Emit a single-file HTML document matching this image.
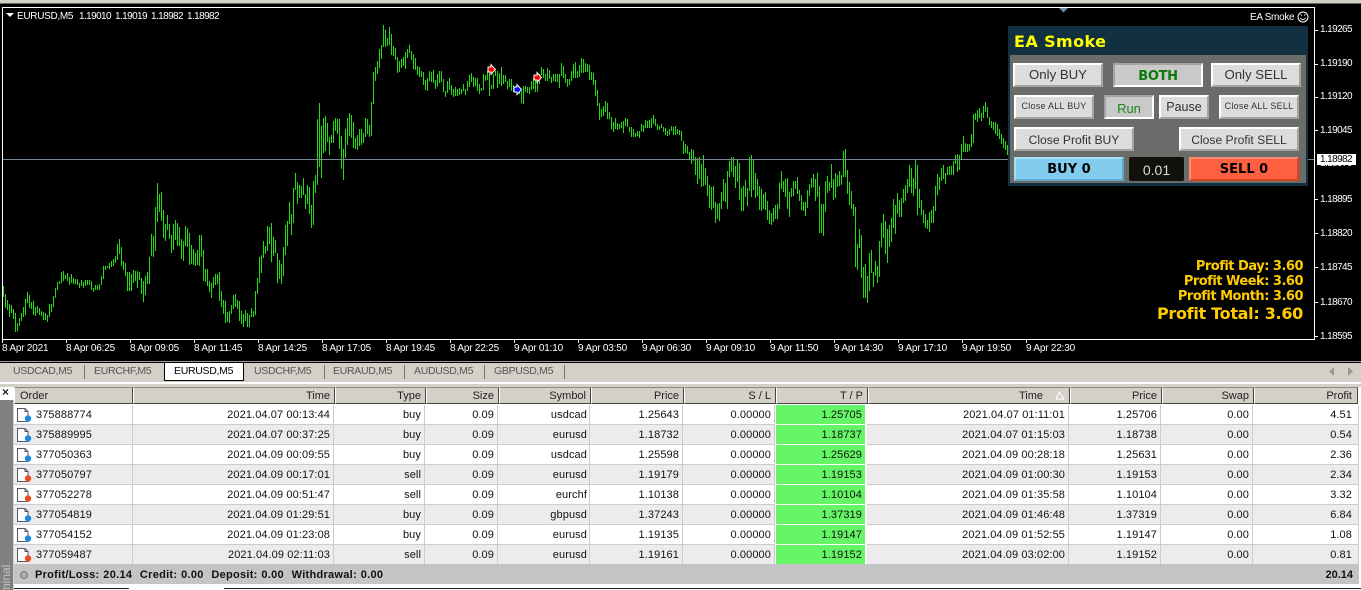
<!DOCTYPE html>
<html><head><meta charset="utf-8"><title>EURUSD,M5</title>
<style>
html,body{margin:0;padding:0;background:#fff;width:1361px;height:590px;overflow:hidden}
#root{width:1361px;height:590px;position:relative;overflow:hidden;font:11px/13px "Liberation Sans",sans-serif;color:#111}
.a{position:absolute;white-space:nowrap}
#chart{left:0;top:4px;width:1361px;height:357px;background:#000}
.w{color:#fff;font-size:10px;line-height:13px;letter-spacing:-.2px}
.n{color:#fff;font-size:10px;line-height:13px;letter-spacing:-.6px}
.btn{position:absolute;box-sizing:border-box;height:24px;background:#dcdcdc;border:2px solid;border-color:#fff #a3a3a3 #a3a3a3 #fff;text-align:center;line-height:20px;color:#333;font-size:13.2px;white-space:nowrap}
.dn{background:#c9c9c9;border-color:#a3a3a3 #fff #fff #a3a3a3}
.sm{font-size:9px;letter-spacing:.25px;line-height:18px}
.md{font-size:12.1px;line-height:22px}
.pf{right:58px;color:#ffcc00;font:bold 13px/15px "DejaVu Sans",sans-serif;letter-spacing:-.5px;text-align:right}
.tab{position:absolute;top:365px;color:#555;font-size:10.5px;letter-spacing:-.3px;line-height:13px;white-space:nowrap}
.sep{position:absolute;top:365px;height:14px;width:1px;background:#777}
.h{position:absolute;top:387px;height:17px;box-sizing:border-box;background:#d4d0c8;border:1px solid;border-color:#888 #444 #444 #fff;text-align:right;padding-right:4px;line-height:17px;font-size:11px;color:#222}
.r{position:absolute;left:14px;width:1345px;height:20px;box-sizing:border-box;border-bottom:1px solid #ccc;line-height:20px;font-size:11px;letter-spacing:.1px;color:#111}
.r.e{background:#eeebef}
.r span{position:absolute;top:0;height:19px;box-sizing:border-box;text-align:right;padding-right:3px;border-right:1px solid #ccc}
.r span:nth-of-type(1){left:0;width:119px;text-align:left;padding-left:22px}
.r span:nth-of-type(2){left:119px;width:201px}
.r span:nth-of-type(3){left:320px;width:91px}
.r span:nth-of-type(4){left:411px;width:73px}
.r span:nth-of-type(5){left:484px;width:92px;padding-right:2px}
.r span:nth-of-type(6){left:576px;width:93px}
.r span:nth-of-type(7){left:669px;width:92px}
.r span:nth-of-type(8){left:761px;width:92px;background:#66f566;border:1px solid #fff;border-width:0 2px 1px 1px;padding-right:3px;height:20px}
.r span:nth-of-type(9){left:853px;width:202px}
.r span:nth-of-type(10){left:1055px;width:92px}
.r span:nth-of-type(11){left:1147px;width:92px}
.r span:nth-of-type(12){left:1239px;width:106px;padding-right:6px}
.r svg{position:absolute;left:3px;top:2px}
</style></head><body><div id="root">
<div class="a" style="left:0;top:0;width:1361px;height:3px;background:#d4d0c8"></div>
<div class="a" style="left:0;top:3px;width:1361px;height:1px;background:#666"></div>
<div class="a" id="chart"></div>
<div class="a" style="left:2px;top:7px;width:1311px;height:331px;border:1px solid #fff"></div>

<svg class="a" style="left:0;top:0" width="1361" height="361" shape-rendering="crispEdges">
<path fill="none" stroke="#22dd11" stroke-width="1" transform="translate(.5 0)" d="M3 286V297M5 294V308M7 300V310M9 304V317M11 305V313M13 309V319M15 313V332M17 323V331M19 318V326M21 313V321M23 307V317M25 299V315M27 292V303M29 295V308M31 302V309M33 301V315M35 307V316M37 306V313M39 308V315M41 311V316M43 312V320M45 313V320M47 315V322M49 304V317M51 304V312M53 296V307M55 288V298M57 282V290M59 281V284M61 272V283M63 271V281M65 275V279M67 273V281M69 277V285M71 274V283M73 278V284M75 279V284M77 279V285M79 283V288M81 280V286M83 282V288M85 280V286M87 280V285M89 280V285M91 281V290M93 288V292M95 285V290M97 285V290M99 284V290M101 276V285M103 266V279M105 266V270M107 266V268M109 263V269M111 261V267M113 259V266M115 256V263M117 244V260M119 239V254M121 247V266M123 261V270M125 263V276M127 272V291M129 272V291M131 274V291M133 270V283M135 271V281M137 271V288M139 272V280M141 278V294M143 281V302M145 276V295M147 272V284M149 257V284M151 234V256M153 236V257M155 207V251M157 183V222M159 194V212M161 192V221M163 210V238M165 224V241M167 215V230M169 224V239M171 235V253M173 224V250M175 220V240M177 223V246M179 227V246M181 239V259M183 241V261M185 226V246M187 228V247M189 233V265M191 245V264M193 249V265M195 253V266M197 250V265M199 235V266M201 235V257M203 250V281M205 269V282M207 269V286M209 281V292M211 283V298M213 277V288M215 274V285M217 274V284M219 272V301M221 291V307M223 300V314M225 301V323M227 312V322M229 311V323M231 305V314M233 295V309M235 294V307M237 300V309M239 301V321M241 311V324M243 314V327M245 310V321M247 313V327M249 315V327M251 308V317M253 311V317M255 291V315M257 278V294M259 257V283M261 255V273M263 241V258M265 246V254M267 226V251M269 227V244M271 223V262M273 237V256M275 240V253M277 253V283M279 260V279M281 264V284M283 247V276M285 225V255M287 221V246M289 202V224M291 214V235M293 188V223M295 173V190M297 182V204M299 185V198M301 186V198M303 178V195M305 194V209M307 185V204M309 187V214M311 205V228M313 181V225M315 175V193M317 119V185M319 103V167M321 126V178M323 118V153M325 116V151M327 123V142M329 137V155M331 135V143M333 121V143M335 118V131M337 119V134M339 119V149M341 136V169M343 149V180M345 129V158M347 118V145M349 113V136M351 115V138M353 122V148M355 138V149M357 135V150M359 129V146M361 129V145M363 133V143M365 118V137M367 119V134M369 125V137M371 102V136M373 72V104M375 67V81M377 61V74M379 49V68M381 45V59M383 25V47M385 30V47M387 38V46M389 27V45M391 34V55M393 46V56M395 48V60M397 57V73M399 61V72M401 59V68M403 57V66M405 52V69M407 49V58M409 45V53M411 51V60M413 54V69M415 58V70M417 66V75M419 67V77M421 71V77M423 72V85M425 80V90M427 78V91M429 71V81M431 72V82M433 70V83M435 80V89M437 74V87M439 71V83M441 71V82M443 79V92M445 91V97M447 81V93M449 78V90M451 85V95M453 89V97M455 87V96M457 89V96M459 88V95M461 89V94M463 84V91M465 89V95M467 81V91M469 75V87M471 73V82M473 77V87M475 78V86M477 78V91M479 84V94M481 88V91M483 74V90M485 75V81M487 71V80M489 69V96M491 85V89M493 74V89M495 71V76M497 71V88M499 73V84M501 67V86M503 75V84M505 75V82M507 81V89M509 79V87M511 79V91M513 85V92M515 86V90M517 88V93M519 90V94M521 91V103M523 86V104M525 86V92M527 87V93M529 87V94M531 81V90M533 78V89M535 80V92M537 81V92M539 74V84M541 67V75M543 69V78M545 74V81M547 68V81M549 70V79M551 77V83M553 74V81M555 74V82M557 74V82M559 74V88M561 63V76M563 66V78M565 74V83M567 79V87M569 79V85M571 71V81M573 64V78M575 62V78M577 71V78M579 65V77M581 58V73M583 59V73M585 63V72M587 64V72M589 65V80M591 72V80M593 73V85M595 80V96M597 90V106M599 103V120M601 109V117M603 106V116M605 101V112M607 103V119M609 112V119M611 117V129M613 122V132M615 118V129M617 123V130M619 124V129M621 122V128M623 121V133M625 118V126M627 119V127M629 127V132M631 127V137M633 129V137M635 133V137M637 131V136M639 131V138M641 124V131M643 125V132M645 120V128M647 121V128M649 120V128M651 118V128M653 115V124M655 119V126M657 124V130M659 126V130M661 124V128M663 127V132M665 128V135M667 131V136M669 129V135M671 126V131M673 127V135M675 126V135M677 129V134M679 130V135M681 131V141M683 141V154M685 144V153M687 146V154M689 152V160M691 149V164M693 150V161M695 157V175M697 158V184M699 157V179M701 164V187M703 155V186M705 168V185M707 176V196M709 185V208M711 187V210M713 186V208M715 202V223M717 204V219M719 203V221M721 192V209M723 179V201M725 183V202M727 171V209M729 161V177M731 157V172M733 157V177M735 166V188M737 160V182M739 163V200M741 188V211M743 186V211M745 180V197M747 188V206M749 157V191M751 155V197M753 160V190M755 173V198M757 179V196M759 186V210M761 189V211M763 194V209M765 192V210M767 201V220M769 210V224M771 213V225M773 208V222M775 205V219M777 204V219M779 183V209M781 171V189M783 181V192M785 179V197M787 178V209M789 192V217M791 188V197M793 181V196M795 181V189M797 177V194M799 190V201M801 195V210M803 202V211M805 202V216M807 190V208M809 184V196M811 178V188M813 174V187M815 179V201M817 173V197M819 186V233M821 204V233M823 204V236M825 181V212M827 176V193M829 182V191M831 164V188M833 179V200M835 173V198M837 175V187M839 171V186M841 175V185M843 151V177M845 149V177M847 170V194M849 182V205M851 191V209M853 204V216M855 207V267M857 244V270M859 229V248M861 235V278M863 267V298M865 264V298M867 276V303M869 253V291M871 250V273M873 272V287M875 261V276M877 266V283M879 241V277M881 223V247M883 214V238M885 221V254M887 229V263M889 225V247M891 218V242M893 199V228M895 205V234M897 193V214M899 200V217M901 198V217M903 189V203M905 185V201M907 179V193M909 165V187M911 168V193M913 178V196M915 160V189M917 165V215M919 189V208M921 200V215M923 210V223M925 214V228M927 220V229M929 212V232M931 210V223M933 206V223M935 186V211M937 174V195M939 177V190M941 168V181M943 165V179M945 173V184M947 167V175M949 166V175M951 166V175M953 161V175M955 155V164M957 154V172M959 155V170M961 144V160M963 136V152M965 143V152M967 144V152M969 144V151M971 134V147M973 114V143M975 113V120M977 110V122M979 108V118M981 113V121M983 106V118M985 102V112M987 107V118M989 117V125M991 121V128M993 122V130M995 122V134M997 124V136M999 129V139M1001 134V144M1003 138V148M1005 141V150M1007 145V155"/>
<path d="M3 159.5H1314" stroke="#778899" fill="none"/>
<g stroke="#fff" fill="#f00" stroke-width="1" shape-rendering="auto">
<path d="M488 67h3v-2.500l4.500 5-4.500 5v-2.500h-3z"/>
<path d="M534 75h3v-2.500l4.500 5-4.500 5v-2.500h-3z"/>
<path d="M514 87h3v-2.500l4.500 5-4.500 5v-2.500h-3z" fill="#00f"/>
</g>
<path d="M1059 8h9l-4.500 4.500z" fill="#6f8a9c" shape-rendering="auto"/>
<path d="M6 13h8l-4 4z" fill="#fff" shape-rendering="auto"/>
<g stroke="#fff" fill="none">
<path d="M1315 30.500h3M1315 64.500h3M1315 97.500h3M1315 130.500h3M1315 199.500h3M1315 233.500h3M1315 267.500h3M1315 302.500h3M1315 336.500h3"/>
<path d="M2.500 340v3M66.500 340v3M130.500 340v3M194.500 340v3M258.500 340v3M322.500 340v3M386.500 340v3M450.500 340v3M514.500 340v3M578.500 340v3M642.500 340v3M706.500 340v3M770.500 340v3M834.500 340v3M898.500 340v3M962.500 340v3M1026.500 340v3"/>
</g>
<g fill="none" stroke="#fff" shape-rendering="auto">
<circle cx="1303" cy="17" r="5"/><path d="M1300.300 18.300q2.700 2.600 5.400 0"/><path d="M1300.500 15h1.500M1304 15h1.500"/>
</g>
</svg>

<div class="a w" style="left:17px;top:10px;letter-spacing:-.3px">EURUSD,M5</div>
<div class="a n" style="left:79px;top:10px">1.19010</div>
<div class="a n" style="left:115px;top:10px">1.19019</div>
<div class="a n" style="left:151px;top:10px">1.18982</div>
<div class="a n" style="left:187px;top:10px">1.18982</div>
<div class="a w" style="left:1250px;top:11px;letter-spacing:-.3px">EA Smoke</div>

<div class="a n" style="left:1320px;top:23px">1.19265</div>
<div class="a n" style="left:1320px;top:57px">1.19190</div>
<div class="a n" style="left:1320px;top:90px">1.19120</div>
<div class="a n" style="left:1320px;top:124px">1.19045</div>
<div class="a n" style="left:1320px;top:157px">1.18970</div>
<div class="a n" style="left:1320px;top:193px">1.18895</div>
<div class="a n" style="left:1320px;top:227px">1.18820</div>
<div class="a n" style="left:1320px;top:261px">1.18745</div>
<div class="a n" style="left:1320px;top:296px">1.18670</div>
<div class="a n" style="left:1320px;top:330px">1.18595</div>
<div class="a" style="left:1317px;top:154px;width:39px;height:11px;background:#fff;color:#000;line-height:11px;padding-left:3px;box-sizing:border-box;font-size:10px;letter-spacing:-.6px">1.18982</div>

<div class="a w" style="left:2px;top:342px">8 Apr 2021</div>
<div class="a w" style="left:66px;top:342px">8 Apr 06:25</div>
<div class="a w" style="left:130px;top:342px">8 Apr 09:05</div>
<div class="a w" style="left:194px;top:342px">8 Apr 11:45</div>
<div class="a w" style="left:258px;top:342px">8 Apr 14:25</div>
<div class="a w" style="left:322px;top:342px">8 Apr 17:05</div>
<div class="a w" style="left:386px;top:342px">8 Apr 19:45</div>
<div class="a w" style="left:450px;top:342px">8 Apr 22:25</div>
<div class="a w" style="left:514px;top:342px">9 Apr 01:10</div>
<div class="a w" style="left:578px;top:342px">9 Apr 03:50</div>
<div class="a w" style="left:642px;top:342px">9 Apr 06:30</div>
<div class="a w" style="left:706px;top:342px">9 Apr 09:10</div>
<div class="a w" style="left:770px;top:342px">9 Apr 11:50</div>
<div class="a w" style="left:834px;top:342px">9 Apr 14:30</div>
<div class="a w" style="left:898px;top:342px">9 Apr 17:10</div>
<div class="a w" style="left:962px;top:342px">9 Apr 19:50</div>
<div class="a w" style="left:1026px;top:342px">9 Apr 22:30</div>

<!-- EA panel -->
<div class="a" style="left:1008px;top:26px;width:300px;height:160px;background:#133040"></div>
<div class="a" style="left:1010px;top:55px;width:296px;height:128px;background:#6a6c69"></div>
<div class="a" style="left:1014px;top:33px;color:#ffff00;font:bold 16px/18px 'DejaVu Sans',sans-serif;letter-spacing:.4px">EA Smoke</div>
<div class="btn" style="left:1013px;top:63px;width:90px">Only BUY</div>
<div class="btn dn" style="left:1113px;top:63px;width:90px;color:#0a7a0a;font:bold 13px/23px 'DejaVu Sans',sans-serif;letter-spacing:-.3px">BOTH</div>
<div class="btn" style="left:1211px;top:63px;width:90px">Only SELL</div>
<div class="btn sm" style="left:1014px;top:95px;width:80px">Close ALL BUY</div>
<div class="btn dn" style="left:1104px;top:95px;width:50px;color:#1a8a1a;font-size:13px;line-height:23px">Run</div>
<div class="btn" style="left:1159px;top:95px;width:50px;font-size:12.5px;line-height:21px">Pause</div>
<div class="btn sm" style="left:1219px;top:95px;width:80px">Close ALL SELL</div>
<div class="btn md" style="left:1014px;top:127px;width:120px">Close Profit BUY</div>
<div class="btn md" style="left:1179px;top:127px;width:120px">Close Profit SELL</div>
<div class="btn" style="left:1014px;top:157px;width:110px;background:#82cdee;border-color:#a8def5 #62a8cc #62a8cc #a8def5;color:#000;font:bold 13px/22px 'DejaVu Sans',sans-serif">BUY 0</div>
<div class="a" style="left:1129px;top:157px;width:55px;height:24px;background:#12100c;color:#ddd;text-align:center;font-size:14px;line-height:27px;border-radius:2px">0.01</div>
<div class="btn" style="left:1189px;top:157px;width:110px;background:#ff6040;border-color:#ff8c70 #d8431f #d8431f #ff8c70;color:#000;font:bold 13px/22px 'DejaVu Sans',sans-serif">SELL 0</div>

<div class="a pf" style="top:259px">Profit Day: 3.60</div>
<div class="a pf" style="top:274px">Profit Week: 3.60</div>
<div class="a pf" style="top:289px">Profit Month: 3.60</div>
<div class="a pf" style="top:305px;font-size:16px;line-height:18px;letter-spacing:-.3px">Profit Total: 3.60</div>

<!-- tabs -->
<div class="a" style="left:0;top:361px;width:1361px;height:1px;background:#9a9a9a"></div>
<div class="a" style="left:0;top:362px;width:1361px;height:1px;background:#000"></div>
<div class="a" style="left:0;top:363px;width:1361px;height:24px;background:#d4d0c8"></div>
<div class="a" style="left:0;top:382px;width:1361px;height:2px;background:#fff"></div>
<div class="a" style="left:164px;top:362px;width:80px;height:19px;box-sizing:border-box;background:#fff;border:1px solid #000"></div>
<div class="tab" style="left:13px">USDCAD,M5</div><div class="sep" style="left:84px"></div>
<div class="tab" style="left:94px">EURCHF,M5</div>
<div class="tab" style="left:174px;color:#000">EURUSD,M5</div>
<div class="tab" style="left:254px">USDCHF,M5</div><div class="sep" style="left:324px"></div>
<div class="tab" style="left:333px">EURAUD,M5</div><div class="sep" style="left:404px"></div>
<div class="tab" style="left:414px">AUDUSD,M5</div><div class="sep" style="left:484px"></div>
<div class="tab" style="left:494px">GBPUSD,M5</div><div class="sep" style="left:564px"></div>
<svg class="a" style="left:1325px;top:365px" width="32" height="12"><path d="M9 2v9L4 6.500z M23 2v9L28 6.500z" fill="#999"/></svg>

<!-- left strip -->
<div class="a" style="left:0;top:387px;width:11px;height:13px;text-align:center;font:bold 12px/10px 'Liberation Sans',sans-serif;color:#222">×</div>
<div class="a" style="left:0;top:400px;width:13px;height:190px;background:#808080"></div>
<div class="a" style="left:13px;top:400px;width:1px;height:190px;background:#d4d0c8"></div>
<div class="a" style="left:0;top:610px;transform-origin:0 0;transform:rotate(-90deg);color:#c4c4c4;font-size:12px;line-height:13px;width:60px">Terminal</div>

<!-- header -->
<div class="h" style="left:14px;width:119px;text-align:left;padding-left:5px">Order</div>
<div class="h" style="left:133px;width:202px">Time</div>
<div class="h" style="left:335px;width:91px">Type</div>
<div class="h" style="left:426px;width:73px">Size</div>
<div class="h" style="left:499px;width:92px">Symbol</div>
<div class="h" style="left:591px;width:93px">Price</div>
<div class="h" style="left:684px;width:92px">S / L</div>
<div class="h" style="left:776px;width:92px">T / P</div>
<div class="h" style="left:868px;width:202px;padding-right:26px">Time</div>
<svg class="a" style="left:1055px;top:391px" width="10" height="9"><path d="M4.500 1L1 8h8z" fill="none" stroke="#fff"/></svg>
<div class="h" style="left:1070px;width:92px">Price</div>
<div class="h" style="left:1162px;width:92px">Swap</div>
<div class="h" style="left:1254px;width:104px;padding-right:5px">Profit</div>

<!-- rows -->
<div class="r" style="top:405px"><svg width="15" height="17"><path d="M.5 1.500h7.500l3 3v10h-10.500z M8 1.500v3h3" fill="#fff" stroke="#556"/><circle cx="11" cy="11.500" r="3.200" fill="#1a8ae0"/></svg><span>375888774</span><span>2021.04.07 00:13:44</span><span>buy</span><span>0.09</span><span>usdcad</span><span>1.25643</span><span>0.00000</span><span>1.25705</span><span>2021.04.07 01:11:01</span><span>1.25706</span><span>0.00</span><span>4.51</span></div>
<div class="r e" style="top:425px"><svg width="15" height="17"><path d="M.5 1.500h7.500l3 3v10h-10.500z M8 1.500v3h3" fill="#fff" stroke="#556"/><circle cx="11" cy="11.500" r="3.200" fill="#1a8ae0"/></svg><span>375889995</span><span>2021.04.07 00:37:25</span><span>buy</span><span>0.09</span><span>eurusd</span><span>1.18732</span><span>0.00000</span><span>1.18737</span><span>2021.04.07 01:15:03</span><span>1.18738</span><span>0.00</span><span>0.54</span></div>
<div class="r" style="top:445px"><svg width="15" height="17"><path d="M.5 1.500h7.500l3 3v10h-10.500z M8 1.500v3h3" fill="#fff" stroke="#556"/><circle cx="11" cy="11.500" r="3.200" fill="#1a8ae0"/></svg><span>377050363</span><span>2021.04.09 00:09:55</span><span>buy</span><span>0.09</span><span>usdcad</span><span>1.25598</span><span>0.00000</span><span>1.25629</span><span>2021.04.09 00:28:18</span><span>1.25631</span><span>0.00</span><span>2.36</span></div>
<div class="r e" style="top:465px"><svg width="15" height="17"><path d="M.5 1.500h7.500l3 3v10h-10.500z M8 1.500v3h3" fill="#fff" stroke="#556"/><circle cx="11" cy="11.500" r="3.200" fill="#e84a1a"/></svg><span>377050797</span><span>2021.04.09 00:17:01</span><span>sell</span><span>0.09</span><span>eurusd</span><span>1.19179</span><span>0.00000</span><span>1.19153</span><span>2021.04.09 01:00:30</span><span>1.19153</span><span>0.00</span><span>2.34</span></div>
<div class="r" style="top:485px"><svg width="15" height="17"><path d="M.5 1.500h7.500l3 3v10h-10.500z M8 1.500v3h3" fill="#fff" stroke="#556"/><circle cx="11" cy="11.500" r="3.200" fill="#e84a1a"/></svg><span>377052278</span><span>2021.04.09 00:51:47</span><span>sell</span><span>0.09</span><span>eurchf</span><span>1.10138</span><span>0.00000</span><span>1.10104</span><span>2021.04.09 01:35:58</span><span>1.10104</span><span>0.00</span><span>3.32</span></div>
<div class="r e" style="top:505px"><svg width="15" height="17"><path d="M.5 1.500h7.500l3 3v10h-10.500z M8 1.500v3h3" fill="#fff" stroke="#556"/><circle cx="11" cy="11.500" r="3.200" fill="#1a8ae0"/></svg><span>377054819</span><span>2021.04.09 01:29:51</span><span>buy</span><span>0.09</span><span>gbpusd</span><span>1.37243</span><span>0.00000</span><span>1.37319</span><span>2021.04.09 01:46:48</span><span>1.37319</span><span>0.00</span><span>6.84</span></div>
<div class="r" style="top:525px"><svg width="15" height="17"><path d="M.5 1.500h7.500l3 3v10h-10.500z M8 1.500v3h3" fill="#fff" stroke="#556"/><circle cx="11" cy="11.500" r="3.200" fill="#1a8ae0"/></svg><span>377054152</span><span>2021.04.09 01:23:08</span><span>buy</span><span>0.09</span><span>eurusd</span><span>1.19135</span><span>0.00000</span><span>1.19147</span><span>2021.04.09 01:52:55</span><span>1.19147</span><span>0.00</span><span>1.08</span></div>
<div class="r e" style="top:545px"><svg width="15" height="17"><path d="M.5 1.500h7.500l3 3v10h-10.500z M8 1.500v3h3" fill="#fff" stroke="#556"/><circle cx="11" cy="11.500" r="3.200" fill="#e84a1a"/></svg><span>377059487</span><span>2021.04.09 02:11:03</span><span>sell</span><span>0.09</span><span>eurusd</span><span>1.19161</span><span>0.00000</span><span>1.19152</span><span>2021.04.09 03:02:00</span><span>1.19152</span><span>0.00</span><span>0.81</span></div>

<!-- summary -->
<div class="a" style="left:14px;top:564px;width:1345px;height:20px;background:#c4c4c4"></div>
<svg class="a" style="left:19px;top:570px" width="10" height="10"><circle cx="5" cy="5" r="3.500" fill="#aaa" stroke="#777"/></svg>
<div class="a" style="left:35px;top:569px;font-weight:bold;font-size:11px;letter-spacing:.28px;color:#111;word-spacing:.5px">Profit/Loss: 20.14&nbsp; Credit: 0.00&nbsp; Deposit: 0.00&nbsp; Withdrawal: 0.00</div>
<div class="a" style="right:8px;top:569px;font-weight:bold;font-size:11px;color:#111">20.14</div>

<!-- bottom tab outline -->
<div class="a" style="left:14px;top:588px;width:115px;height:1px;background:#222"></div>
<div class="a" style="left:224px;top:588px;width:1137px;height:1px;background:#222"></div>
</div></body></html>
